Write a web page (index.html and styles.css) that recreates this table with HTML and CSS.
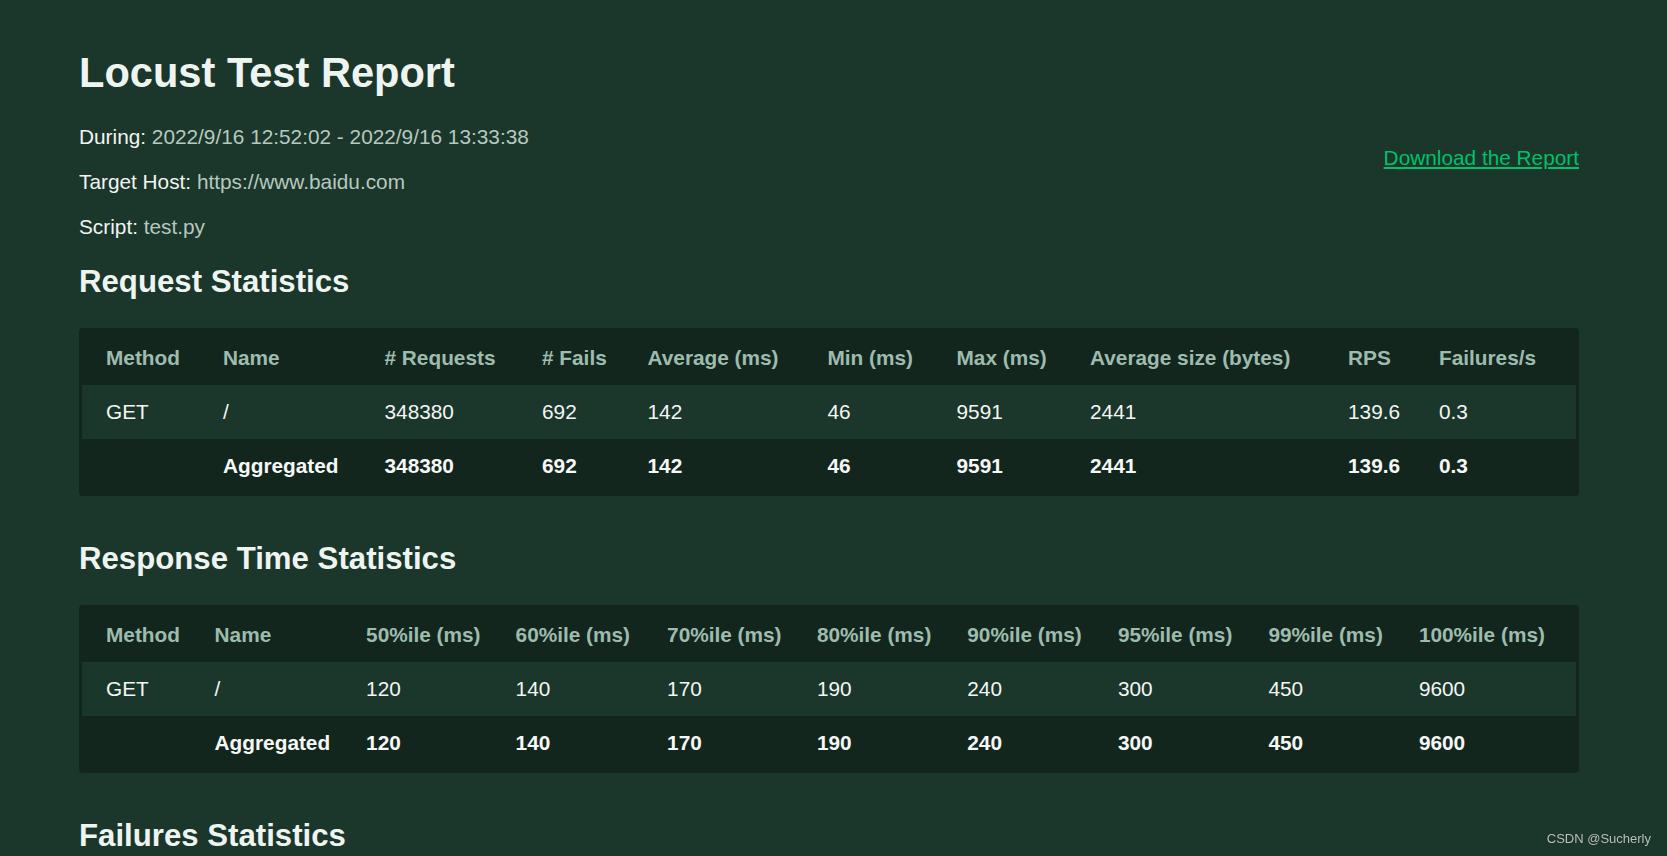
FILE: index.html
```html
<!DOCTYPE html>
<html lang="en">
<head>
<meta charset="utf-8">
<title>Locust Test Report</title>
<link rel="stylesheet" href="styles.css">
</head>
<body>
<div class="page">
  <header class="top">
    <div class="info">
      <h1>Locust Test Report</h1>
      <p>During: <span class="val">2022/9/16 12:52:02 - 2022/9/16 13:33:38</span></p>
      <p>Target Host: <span class="val">https://www.baidu.com</span></p>
      <p>Script: <span class="val">test.py</span></p>
    </div>
    <div class="download"><a href="#">Download the Report</a></div>
  </header>

  <h2>Request Statistics</h2>
  <div class="card">
    <table class="stats">
      <colgroup>
        <col class="r1"><col class="r2"><col class="r3"><col class="r4"><col class="r5">
        <col class="r6"><col class="r7"><col class="r8"><col class="r9"><col class="r10">
      </colgroup>
      <thead>
        <tr><th>Method</th><th>Name</th><th># Requests</th><th># Fails</th><th>Average (ms)</th><th>Min (ms)</th><th>Max (ms)</th><th>Average size (bytes)</th><th>RPS</th><th>Failures/s</th></tr>
      </thead>
      <tbody>
        <tr class="row"><td>GET</td><td>/</td><td>348380</td><td>692</td><td>142</td><td>46</td><td>9591</td><td>2441</td><td>139.6</td><td>0.3</td></tr>
        <tr class="total"><td></td><td>Aggregated</td><td>348380</td><td>692</td><td>142</td><td>46</td><td>9591</td><td>2441</td><td>139.6</td><td>0.3</td></tr>
      </tbody>
    </table>
  </div>

  <h2>Response Time Statistics</h2>
  <div class="card">
    <table class="stats">
      <colgroup>
        <col class="t1"><col class="t2"><col class="t3"><col class="t4"><col class="t5">
        <col class="t6"><col class="t7"><col class="t8"><col class="t9"><col class="t10">
      </colgroup>
      <thead>
        <tr><th>Method</th><th>Name</th><th>50%ile (ms)</th><th>60%ile (ms)</th><th>70%ile (ms)</th><th>80%ile (ms)</th><th>90%ile (ms)</th><th>95%ile (ms)</th><th>99%ile (ms)</th><th>100%ile (ms)</th></tr>
      </thead>
      <tbody>
        <tr class="row"><td>GET</td><td>/</td><td>120</td><td>140</td><td>170</td><td>190</td><td>240</td><td>300</td><td>450</td><td>9600</td></tr>
        <tr class="total"><td></td><td>Aggregated</td><td>120</td><td>140</td><td>170</td><td>190</td><td>240</td><td>300</td><td>450</td><td>9600</td></tr>
      </tbody>
    </table>
  </div>

  <h2>Failures Statistics</h2>
  <div class="card">
    <table class="stats">
      <thead>
        <tr><th>Method</th><th>Name</th><th>Error</th><th>Occurrences</th></tr>
      </thead>
      <tbody>
        <tr class="row"><td>GET</td><td>/</td><td>ConnectionError</td><td>692</td></tr>
      </tbody>
    </table>
  </div>
</div>
<div class="watermark">CSDN @Sucherly</div>
</body>
</html>
```

FILE: styles.css
```css
html, body {
  margin: 0;
  padding: 0;
}

body {
  background: #1b362b;
  color: #f1f4f2;
  font-family: "Liberation Sans", Arial, Helvetica, sans-serif;
  font-size: 20.8px;
  line-height: normal;
}

.page {
  padding: 49px 88px 40px 79px;
}

.top {
  display: flex;
  justify-content: space-between;
  align-items: flex-start;
}

h1 {
  font-size: 41.6px;
  font-weight: bold;
  margin: 0 0 28px;
  color: #eef5f1;
}

.info p {
  margin: 0 0 21px;
}

.info p:last-child {
  margin-bottom: 0;
}

.val {
  color: #b7c9bf;
}

.download {
  margin-top: 97px;
}

.download a {
  color: #00c16a;
  text-decoration: underline;
}

h2 {
  font-size: 31.2px;
  font-weight: bold;
  margin: 25px 0 28px;
  color: #eef5f1;
}

.card {
  background: #13261e;
  border-radius: 4px;
  padding: 3px;
  margin-bottom: 45px;
}

.stats {
  width: 100%;
  border-collapse: collapse;
  table-layout: fixed;
}

.stats th,
.stats td {
  text-align: left;
  padding: 15px 0 15px 24px;
  line-height: 24px;
  white-space: nowrap;
}

.stats th {
  color: #9dbcae;
  font-weight: bold;
}

.stats .row {
  background: #1b362b;
}

.stats .row td {
  color: #f3f6f4;
}

.stats .total td {
  font-weight: bold;
  color: #f6f8f7;
}

/* Request statistics columns */
.r1 { width: 117px; }
.r2 { width: 161.5px; }
.r3 { width: 157.5px; }
.r4 { width: 105.5px; }
.r5 { width: 180px; }
.r6 { width: 129px; }
.r7 { width: 133.5px; }
.r8 { width: 258px; }
.r9 { width: 91px; }
.r10 { width: 161px; }

/* Response time columns */
.t1 { width: 108.6px; }
.t2 { width: 151.5px; }
.t3 { width: 149.5px; }
.t4 { width: 151.5px; }
.t5 { width: 149.8px; }
.t6 { width: 150.4px; }
.t7 { width: 150.6px; }
.t8 { width: 150.5px; }
.t9 { width: 150.5px; }
.t10 { width: 181.1px; }

.watermark {
  position: fixed;
  right: 16px;
  bottom: 10px;
  font-size: 13px;
  color: #b9c2bd;
  text-shadow: 0 0 1px rgba(0, 0, 0, 0.4);
}
```
